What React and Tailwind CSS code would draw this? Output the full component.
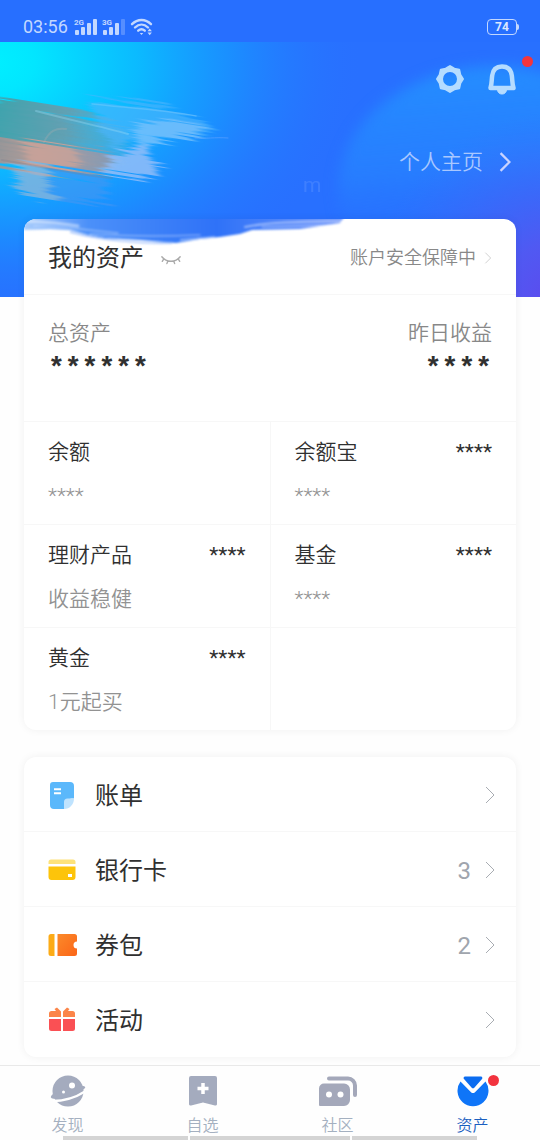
import React from "react";

const holdings = [
  { name: "余额", value: "", note: "****" },
  { name: "余额宝", value: "****", note: "****" },
  { name: "理财产品", value: "****", note: "收益稳健" },
  { name: "基金", value: "****", note: "****" },
  { name: "黄金", value: "****", note: "1元起买" },
];

const SignalIcon = ({ label, weak }) => (
  <svg width="24" height="18" viewBox="0 0 24 18" fill="#c3d8ff">
    <text x="0" y="7" fontSize="8" fontWeight="700" fontFamily="Roboto, sans-serif">{label}</text>
    <rect x="1" y="12" width="4" height="5" rx="1" />
    <rect x="7" y="9" width="4" height="8" rx="1" />
    <rect x="13" y="5" width="4" height="12" rx="1" />
    <rect x="19" y="1" width="4" height="16" rx="1" opacity={weak ? 0.3 : 1} />
  </svg>
);

const StatusBar = () => (
  <div className="relative flex h-[42px] items-center justify-between bg-[#276fff] pt-3 pr-[23px] pl-[23px]">
    <div className="flex items-center gap-1">
      <span className="mr-0.5 text-lg leading-5 text-[#c3d8ff]">03:56</span>
      <SignalIcon label="2G" />
      <SignalIcon label="3G" weak />
      <svg width="24" height="18" viewBox="0 0 24 18" fill="none" stroke="#c3d8ff" strokeWidth="2.4" strokeLinecap="round">
        <path d="M2 6.200C7.500 .6 15.500 .6 21 6.200" />
        <path d="M5 9.500C9 5.600 14 5.600 18 9.500" />
        <path d="M8.200 12.700C10.400 10.700 12.600 10.700 14.800 12.700" />
        <path d="M9.800 15h3.400l-1.700 2z" fill="#c3d8ff" stroke="none" />
        <path d="M17.500 13.200l2.200-2.700 2.200 2.700zM17.500 14.500l2.200 2.700 2.200-2.700z" fill="#c3d8ff" stroke="none" />
      </svg>
    </div>
    <div className="relative flex h-4 w-[30px] items-center justify-center rounded-[4px] border border-[#c3d8ff] text-[12px] leading-3 font-bold text-[#dbe7ff]">
      74
      <span className="absolute top-1 -right-[3px] h-1.5 w-0.5 rounded-r bg-[#c3d8ff]" />
    </div>
  </div>
);

// Gradient sky with the painted strokes behind the header
const HeaderArt = () => (
  <svg className="absolute inset-0 h-full w-full" viewBox="0 42 540 255" preserveAspectRatio="none" aria-hidden="true">
    <defs>
      <radialGradient id="cyan" gradientUnits="userSpaceOnUse" cx="0" cy="0" r="1" gradientTransform="translate(-10 62) scale(370 260)">
        <stop offset="0" stopColor="#00f0ff" />
        <stop offset=".12" stopColor="#02e6ff" />
        <stop offset=".4" stopColor="#0abeff" stopOpacity=".95" />
        <stop offset=".65" stopColor="#1699ff" stopOpacity=".75" />
        <stop offset="1" stopColor="#2873ff" stopOpacity="0" />
      </radialGradient>
      <linearGradient id="glow" x1="0" y1="0" x2="0.1" y2="1">
        <stop offset="0" stopColor="#2490ff" />
        <stop offset=".45" stopColor="#2783ff" stopOpacity=".7" />
        <stop offset=".75" stopColor="#286fff" stopOpacity="0" />
      </linearGradient>
      <radialGradient id="violet" gradientUnits="userSpaceOnUse" cx="565" cy="310" r="200">
        <stop offset="0" stopColor="#6046ec" />
        <stop offset=".35" stopColor="#5755f0" stopOpacity=".85" />
        <stop offset="1" stopColor="#3a6cfa" stopOpacity="0" />
      </radialGradient>
      <linearGradient id="tan" x1="0" y1="0" x2="1" y2="0">
        <stop offset="0" stopColor="#7f8c96" />
        <stop offset=".5" stopColor="#bd9c96" />
        <stop offset="1" stopColor="#8a98b0" />
      </linearGradient>
      <linearGradient id="teal" x1="0" y1="0" x2="1" y2="0">
        <stop offset="0" stopColor="#2fa5ab" />
        <stop offset=".6" stopColor="#62a0b2" />
        <stop offset="1" stopColor="#4fb0dc" stopOpacity=".5" />
      </linearGradient>
      <filter id="bristle" x="-20%" y="-20%" width="140%" height="140%" colorInterpolationFilters="sRGB">
        <feTurbulence type="fractalNoise" baseFrequency="0.006 0.35" numOctaves="3" seed="7" result="noise" />
        <feDisplacementMap in="SourceGraphic" in2="noise" scale="30" xChannelSelector="R" yChannelSelector="G" result="torn" />
        <feGaussianBlur in="torn" stdDeviation="3 0.7" />
      </filter>
      <filter id="soft" colorInterpolationFilters="sRGB">
        <feGaussianBlur stdDeviation="7" />
      </filter>
    </defs>
    <rect y="42" width="540" height="255" fill="#2870ff" />
    <rect y="42" width="540" height="255" fill="url(#cyan)" />
    <ellipse cx="496" cy="190" rx="158" ry="124" fill="url(#glow)" filter="url(#soft)" />
    <rect y="42" width="540" height="255" fill="url(#violet)" />
    <g filter="url(#bristle)" transform="rotate(9 0 140)">
      <path d="M-40 102L60 98 126 106 124 140 112 160-40 164z" fill="url(#teal)" />
      <path d="M84 86L150 80 196 88 208 100 190 110 130 118 110 132 96 110z" fill="#4fb4fb" opacity=".6" />
      <path d="M132 100L170 94 200 98 190 108 160 114 146 126 134 130z" fill="#8ac6fb" opacity=".6" />
      <path d="M-40 140L108 134 116 148 104 160-40 166z" fill="url(#tan)" opacity=".9" />
      <path d="M22 138L72 136 84 154 50 164 28 162z" fill="#cfa498" opacity=".7" />
      <path d="M112 140L144 122 152 136 164 146 146 158 104 160z" fill="#93bdf8" opacity=".85" />
      <path d="M18 160L50 160 66 190 50 194 26 186z" fill="#8fb6da" opacity=".75" />
      <path d="M52 164L112 162 116 184 62 192z" fill="#4b95f0" opacity=".55" />
    </g>
    <g fill="none" strokeLinecap="round">
      <path d="M36 111C70 120 100 126 128 134" stroke="#9edcf5" strokeWidth="2" opacity=".35" />
      <path d="M92 104C130 108 165 110 196 116" stroke="#9fd6fd" strokeWidth="1.500" opacity=".3" />
      <path d="M2 160C40 166 70 174 112 178" stroke="#7c7f90" strokeWidth="2" opacity=".3" />
      <path d="M44 142C50 130 56 128 66 129" stroke="#9aa9b0" strokeWidth="2" opacity=".4" />
      <path d="M195 138C205 139 215 137 228 138" stroke="#72a9ff" strokeWidth="1" opacity=".5" />
    </g>
    <text x="303" y="192" fontSize="21" fontFamily="Roboto, sans-serif" fill="#ffffff" opacity=".1">m</text>
  </svg>
);

// Blue paint that runs over the top edge of the asset card
const CardPaint = () => (
  <svg className="pointer-events-none absolute top-0 left-0 h-7 w-[325px]" viewBox="24 219 325 28" aria-hidden="true">
    <defs>
      <linearGradient id="paint" x1="0" y1="0" x2="1" y2="0">
        <stop offset="0" stopColor="#a9cdfd" />
        <stop offset=".2" stopColor="#4b90f9" />
        <stop offset=".6" stopColor="#2f72f8" />
        <stop offset="1" stopColor="#6f96fb" />
      </linearGradient>
      <filter id="smear" colorInterpolationFilters="sRGB">
        <feGaussianBlur stdDeviation="0.8" />
      </filter>
    </defs>
    <g filter="url(#smear)">
      <path d="M24 216H345L340 223 300 229 252 230 240 234 220 237 200 239 176 243 140 240 105 238 88 235 70 230 50 229 24 230z" fill="url(#paint)" />
      <g fill="none" stroke="#ffffff" strokeLinecap="round">
        <path d="M26 221C45 222 60 223 78 226" strokeWidth="3" opacity=".45" />
        <path d="M34 226C60 226 85 230 118 233" strokeWidth="1.500" opacity=".35" />
        <path d="M90 234C120 236 150 237 200 235" strokeWidth="1.500" opacity=".35" />
        <path d="M245 227C270 222 300 222 342 221" strokeWidth="2" opacity=".45" />
        <path d="M262 227L330 225" strokeWidth="1" opacity=".6" />
      </g>
      <path d="M70 232C100 240 140 244 172 243M180 240L215 237" fill="none" stroke="#9fc0fc" strokeWidth="1.500" />
    </g>
  </svg>
);

const GearIcon = () => (
  <svg width="30" height="30" viewBox="0 0 30 30">
    <path
      d="M15 2L19.300 4.700 24.200 5.800 25.300 10.700 28 15 25.300 19.300 24.200 24.200 19.300 25.300 15 28 10.700 25.300 5.800 24.200 4.700 19.300 2 15 4.700 10.700 5.800 5.800 10.700 4.700zM15 7a8 8 0 1 0 0 16a8 8 0 1 0 0-16z"
      fill="#b5dcff" stroke="#b5dcff" strokeWidth="2" strokeLinejoin="round" fillRule="evenodd"
    />
  </svg>
);

const BellIcon = () => (
  <svg width="32" height="32" viewBox="0 0 32 32">
    <path d="M4.500 25C6 20.500 5.500 17 6.200 12.500C7 6.500 10.800 3.500 16 3.500S25 6.500 25.800 12.500C26.500 17 26 20.500 27.500 25z" fill="none" stroke="#b5dcff" strokeWidth="4.500" strokeLinejoin="round" />
    <path d="M11 26H21C20 30 18.500 31 16 31S12 30 11 26z" fill="#b5dcff" stroke="#b5dcff" strokeWidth="1" strokeLinejoin="round" />
  </svg>
);

const Chevron = ({ className }) => (
  <svg className={className} viewBox="0 0 10 18" fill="none" stroke="currentColor" aria-hidden="true">
    <path d="M1 1l8 8-8 8" />
  </svg>
);

const Holding = ({ item }) => (
  <div className="flex h-[102px] flex-col gap-4 px-6 pt-4">
    <div className="flex items-center justify-between text-[#303030]">
      <span>{item.name}</span>
      <span className="font-normal">{item.value}</span>
    </div>
    <span className="text-[#929292]">{item.note}</span>
  </div>
);

const BillIcon = () => (
  <svg width="28" height="30" viewBox="0 0 28 30">
    <path d="M5 2H22a4 4 0 0 1 4 4V18.500C19 18.500 16 21 16 29H6a4 4 0 0 1-4-4V5a3 3 0 0 1 3-3z" fill="#5bb8fb" />
    <path d="M26 18.500C26 24 22 29 16 29V22a3.500 3.500 0 0 1 3.500-3.500z" fill="#bfe3fe" />
    <path d="M6 9.200h7M6 13.200h7" stroke="#fff" strokeWidth="2" />
  </svg>
);

const CardIcon = () => (
  <svg width="28" height="30" viewBox="0 0 28 30">
    <path d="M3 4.500H25a2.500 2.500 0 0 1 2.500 2.500V9H.5V7A2.500 2.500 0 0 1 3 4.500z" fill="#fde27a" />
    <path d="M.5 11.500H27.500V22a3 3 0 0 1-3 3h-21a3 3 0 0 1-3-3z" fill="#fdc40a" />
    <rect x="20" y="19" width="4" height="3" fill="#fff" />
  </svg>
);

const CouponIcon = () => (
  <svg width="29" height="30" viewBox="0 0 29 30">
    <defs>
      <linearGradient id="coupon" x1="0" y1="0" x2="1" y2="1">
        <stop offset="0" stopColor="#fb8a2a" />
        <stop offset="1" stopColor="#fb6518" />
      </linearGradient>
    </defs>
    <path d="M3 4H6.500V26H3a2.500 2.500 0 0 1-2.500-2.500v-17A2.500 2.500 0 0 1 3 4z" fill="#fcab17" />
    <path d="M9.500 4H26.500a2.500 2.500 0 0 1 2.500 2.500V11.500a3.500 3.500 0 0 0 0 7V23.500A2.500 2.500 0 0 1 26.500 26H9.500z" fill="url(#coupon)" />
  </svg>
);

const GiftIcon = () => (
  <svg width="28" height="30" viewBox="0 0 28 30">
    <path d="M1 12V8.500A2.500 2.500 0 0 1 3.500 6H8L6.500 4 9 2.500 13 6.500V12zM15 12V6.500L19 2.500 21.500 4 20 6h4.500A2.500 2.500 0 0 1 27 8.500V12z" fill="#fb8549" />
    <path d="M1 14H13V26H3.500A2.500 2.500 0 0 1 1 23.500zM15 14H27v9.500a2.500 2.500 0 0 1-2.500 2.500H15z" fill="#fa5054" />
  </svg>
);

const services = [
  { name: "账单", icon: BillIcon, count: "" },
  { name: "银行卡", icon: CardIcon, count: "3" },
  { name: "券包", icon: CouponIcon, count: "2" },
  { name: "活动", icon: GiftIcon, count: "" },
];

const DiscoverIcon = () => (
  <svg width="40" height="36" viewBox="0 0 40 36">
    <circle cx="20" cy="18" r="15.500" fill="#a4abbe" />
    <path d="M5 21C2.500 23 2 25 4.500 25.500C12 27 32 20 36.500 15.500C38 14 37 13 34.500 13z" fill="#a4abbe" />
    <path d="M5 28C14 28 27 25 37 18.500" fill="none" stroke="#fff" strokeWidth="2.500" />
    <circle cx="24" cy="12.500" r="3" fill="#fff" />
    <circle cx="15.500" cy="19" r="1.500" fill="#fff" />
  </svg>
);

const WatchIcon = () => (
  <svg width="40" height="36" viewBox="0 0 40 36">
    <path d="M8 3H32a2 2 0 0 1 2 2V31a1.500 1.500 0 0 1-2 1.500L20 29.500 8 32.500A1.500 1.500 0 0 1 6 31V5A2 2 0 0 1 8 3z" fill="#a4abbe" />
    <path d="M20 10v11M14.500 15.500h11" stroke="#fff" strokeWidth="3.500" />
  </svg>
);

const CommunityIcon = () => (
  <svg width="40" height="36" viewBox="0 0 40 36">
    <path d="M6 10.500H26a6 6 0 0 1 6 6V27a6 6 0 0 1-6 6H2a1 1 0 0 1-1-1V15.500a5 5 0 0 1 5-5z" fill="#a4a8ba" />
    <path d="M11 5.500H30a7 7 0 0 1 7 7V22" fill="none" stroke="#a4a8ba" strokeWidth="4" strokeLinecap="round" />
    <circle cx="11" cy="21.500" r="3" fill="#fff" />
    <circle cx="22.500" cy="21.500" r="3" fill="#fff" />
  </svg>
);

const AssetsIcon = () => (
  <svg width="40" height="36" viewBox="0 0 40 36">
    <path d="M7.500 8.500L18 19.200a3 3 0 0 0 4 0L32.500 8.500A15.500 15.500 0 1 1 7.500 8.500z" fill="#0f75f8" />
    <path d="M12.500 3.500H28a1.500 1.500 0 0 1 1 2.500L21.500 14.500a2 2 0 0 1-3 0L11 6A1.500 1.500 0 0 1 12.500 3.500z" fill="#0b6cf0" />
  </svg>
);

const tabs = [
  { name: "发现", icon: DiscoverIcon },
  { name: "自选", icon: WatchIcon },
  { name: "社区", icon: CommunityIcon },
  { name: "资产", icon: AssetsIcon, active: true },
];

const App = () => {
  return (
    <div className="flex min-h-screen flex-col bg-[#fefefe] font-[Roboto,'Noto_Sans_CJK_SC',sans-serif]">
      <StatusBar />

      <header className="relative h-[255px] overflow-hidden">
        <HeaderArt />
        <div className="relative flex flex-col gap-[51px] pt-[21px] pr-[22px]">
          <div className="flex items-center justify-end gap-[21px]">
            <button type="button" aria-label="设置"><GearIcon /></button>
            <button type="button" aria-label="消息" className="relative">
              <BellIcon />
              <span className="absolute -top-[7px] -right-[15px] size-[11px] rounded-full bg-[#f5353c]" />
            </button>
          </div>
          <a href="#profile" className="flex items-center justify-end gap-4 pr-[7px] text-[21px] leading-8 font-[350] text-[#a9c8ff]">
            个人主页
            <Chevron className="h-5 w-3 stroke-2 text-[#c9d3ff]" />
          </a>
        </div>
      </header>

      <main className="relative -mt-[78px] flex grow flex-col gap-[27px] px-6 pb-[7px]">
        <section className="relative overflow-hidden rounded-xl bg-white shadow-[0_0_8px_rgba(0,0,0,0.06)]">
          <CardPaint />
          <div className="relative flex h-[75px] items-center justify-between px-6 pt-0.5">
            <h1 className="flex items-center gap-4 text-2xl text-[#303030]">
              我的资产
              <svg className="mt-1" width="22" height="11" viewBox="0 0 24 12" fill="none" stroke="#aaaaaa" strokeWidth="1.500" strokeLinecap="round">
                <path d="M2 3C7 9.500 17 9.500 22 3M4 5.500L2.500 8M8.500 7.800L7.500 10.500M15 7.800L16 10.500M20 5.500L21.500 8" />
              </svg>
            </h1>
            <a href="#security" className="flex items-center gap-2 text-lg font-[350] text-[#888888]">
              账户安全保障中
              <Chevron className="h-3 w-2 text-[#bbbbbb]" />
            </a>
          </div>

          <div className="flex h-[128px] justify-between border-y border-[#f7f7f7] px-6 pt-[22px] text-[#303030]">
            <div className="flex flex-col gap-1">
              <span className="text-[21px] leading-8 font-[350] text-[#888888]">总资产</span>
              <span className="font-['Liberation_Mono',monospace] text-[28px] leading-8 font-bold">******</span>
            </div>
            <div className="flex flex-col items-end gap-1">
              <span className="text-[21px] leading-8 font-[350] text-[#888888]">昨日收益</span>
              <span className="font-['Liberation_Mono',monospace] text-[28px] leading-8 font-bold">****</span>
            </div>
          </div>

          <div className="grid grid-cols-2 gap-px bg-[#f7f7f7] text-[21px] leading-7 font-[350]">
            {holdings.map((item) => (
              <div key={item.name} className="bg-white">
                <Holding item={item} />
              </div>
            ))}
            <div className="bg-white" />
          </div>
        </section>

        <section className="divide-y divide-[#f7f7f7] rounded-xl bg-white shadow-[0_0_8px_rgba(0,0,0,0.06)]">
          {services.map(({ name, icon: Icon, count }) => (
            <a key={name} href="#service" className="flex h-[75px] items-center pt-px pr-[21px] pl-6 text-2xl text-[#303030]">
              <span className="w-[47px]"><Icon /></span>
              <span className="grow pt-0.5">{name}</span>
              <span className="pt-0.5 text-[#a0a5ad]">{count}</span>
              <Chevron className="ml-[14px] h-5 w-[10px] text-[#a8acb2]" />
            </a>
          ))}
        </section>
      </main>

      <nav className="sticky bottom-0 grid h-[75px] grid-cols-4 border-t border-[#e9e9e9] bg-[#fefefe]">
        {tabs.map(({ name, icon: Icon, active }) => (
          <a
            key={name}
            href="#tab"
            className={`flex flex-col items-center gap-[5px] pt-[7px] text-base leading-6 font-[350] ${active ? "text-[#1a5fc0]" : "text-[#a4b0c0]"}`}
          >
            <span className="relative">
              <Icon />
              {active && <span className="absolute top-0.5 -right-1.5 size-[11px] rounded-full bg-[#f2333e]" />}
            </span>
            {name}
          </a>
        ))}
        <div className="absolute inset-x-[63px] bottom-0 flex h-1 gap-0.5">
          <span className="w-[125px] bg-[#d4d4d4]" />
          <span className="w-[160px] bg-[#d4d4d4]" />
          <span className="grow bg-[#d4d4d4]" />
        </div>
      </nav>
    </div>
  );
};

export default App;
